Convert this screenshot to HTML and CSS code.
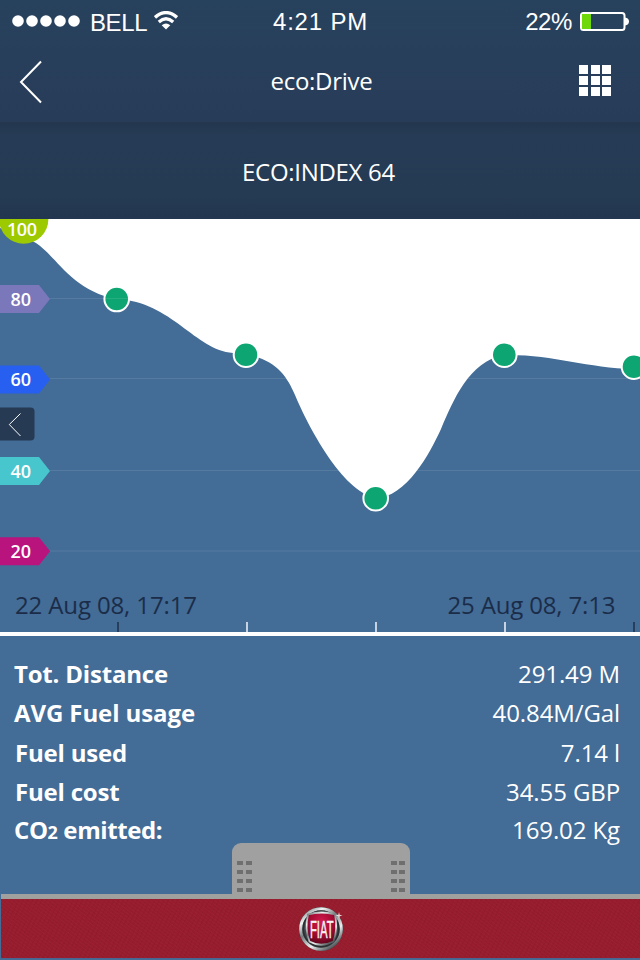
FILE: index.html
```html
<!DOCTYPE html>
<html lang="en">
<head>
<meta charset="utf-8">
<title>eco:Drive</title>
<link rel="stylesheet" href="styles.css">
</head>
<body>
<main class="app">
  <header class="top">
    <div class="status">
      <div class="carrier">
        <svg class="signal" width="68" height="12" viewBox="0 0 68 12"><g fill="#fff"><circle cx="6" cy="6" r="5.8"/><circle cx="20" cy="6" r="5.8"/><circle cx="34" cy="6" r="5.8"/><circle cx="48" cy="6" r="5.8"/><circle cx="62" cy="6" r="5.8"/></g></svg>
        <span class="carrier-name">BELL</span>
        <svg class="wifi" width="24" height="19" viewBox="0 0 24 19"><g fill="none" stroke="#fff" stroke-width="3.300"><path d="M1 6.400Q12-3.200 23 6.400"/><path d="M4.800 10.900Q12 4.600 19.200 10.900"/></g><path fill="#fff" d="M7.700 14.300Q12 10.600 16.300 14.300L12 18.600Z"/></svg>
      </div>
      <time class="clock">4:21 PM</time>
      <div class="power">
        <span class="percent">22%</span>
        <svg class="battery" width="49" height="19" viewBox="0 0 49 19"><rect x="1" y="1" width="43.500" height="17" rx="2.500" fill="none" stroke="#fff" stroke-width="2"/><path d="M45 5.500Q49 6 49 9.500T45 13.500Z" fill="#fff"/><rect x="2" y="2" width="9" height="15" fill="#6fd80a"/></svg>
      </div>
    </div>
    <nav class="nav">
      <svg class="back" width="24" height="44" viewBox="0 0 24 44"><path d="M22 1.500L2 22L22 42.500" fill="none" stroke="#fff" stroke-width="2"/></svg>
      <h1 class="title">eco:Drive</h1>
      <div class="menu"><i></i><i></i><i></i><i></i><i></i><i></i><i></i><i></i><i></i></div>
    </nav>
  </header>
  <section class="index"><h2 class="index-title">ECO:INDEX 64</h2></section>
  <section class="chart">
    <svg class="plot" width="640" height="413" viewBox="0 219 640 413">
      <rect y="219" width="640" height="413" fill="#fff"/>
      <path fill="#436c96" d="M0 228Q20 234 36 243C58 258 72 291 117 299C172 302 195 350 233 353C272 355 286 373 295 395C308 426 342 491 375.500 498C406 498 430 453 441 429C453 401 469 361 504 355C552 354 586 368 634 369H640V632H0Z"/>
      <g fill="#0da571" stroke="#fff" stroke-width="2"><circle cx="116.700" cy="299" r="12.300"/><circle cx="246" cy="354.700" r="12.300"/><circle cx="375.700" cy="498.200" r="12.300"/><circle cx="504.300" cy="354.700" r="12.300"/><circle cx="634" cy="366.700" r="12.300"/></g>
      <g stroke="#fff" stroke-opacity=".1"><path d="M50 298.500H640M50 378.500H640M50 470.500H640M50 551H640"/></g>
      <circle cx="23.700" cy="219" r="24.700" fill="#9cc900"/>
      <path d="M0 285H39L50 299L39 313H0Z" fill="#7a77ba"/>
      <path d="M0 365.500H39L50 379.500L39 393.500H0Z" fill="#275ff0"/>
      <path d="M0 457H39L50 471L39 485H0Z" fill="#48c6ce"/>
      <path d="M0 537.300H39L50 551.300L39 565.300H0Z" fill="#b9137e"/>
      <g class="scale"><text x="22" y="236.300" textLength="30">100</text><text x="20.800" y="305.500">80</text><text x="20.800" y="386">60</text><text x="20.800" y="477.500">40</text><text x="20.800" y="557.800">20</text></g>
      <path d="M0 407.500H30.500Q34.500 407.500 34.500 411.500V436.500Q34.500 440.500 30.500 440.500H0Z" fill="#263a53"/>
      <path d="M20.500 413.500L9.300 424.500L20.500 436" fill="none" stroke="#fff"/>
      <g stroke-width="1.600"><path d="M118 622V632M634 622V632" stroke="#22334e"/><path d="M247 622V632M376 622V632M505 622V632" stroke="#e8edf3"/></g>
      <g class="dates"><text x="15" y="613.500" textLength="182">22 Aug 08, 17:17</text><text x="447.500" y="613.500" textLength="168">25 Aug 08, 7:13</text></g>
    </svg>
  </section>
  <dl class="stats">
    <div class="row"><dt>Tot. Distance</dt><dd>291.49 M</dd></div>
    <div class="row avg"><dt>AVG Fuel usage</dt><dd>40.84M/Gal</dd></div>
    <div class="row fuel"><dt>Fuel used</dt><dd>7.14 l</dd></div>
    <div class="row fuel"><dt>Fuel cost</dt><dd>34.55 GBP</dd></div>
    <div class="row co2"><dt>CO<small>2</small> emitted:</dt><dd>169.02 Kg</dd></div>
  </dl>
  <div class="dock">
    <div class="grip"><i></i><i></i><i></i><i></i><i></i><i></i><i></i><i></i></div>
    <div class="grip"><i></i><i></i><i></i><i></i><i></i><i></i><i></i><i></i></div>
  </div>
  <footer class="brand">
    <svg class="logo" width="46" height="46" viewBox="0 0 46 46">
      <defs>
        <linearGradient id="chrome" x1="0" y1="0" x2=".7" y2="1"><stop offset="0" stop-color="#555b60"/><stop offset=".25" stop-color="#f1f3f3"/><stop offset=".48" stop-color="#777d80"/><stop offset=".75" stop-color="#eceeee"/><stop offset="1" stop-color="#555b5e"/></linearGradient>
        <radialGradient id="ruby" cx=".5" cy=".3" r=".75"><stop offset="0" stop-color="#d31b50"/><stop offset=".55" stop-color="#a10b31"/><stop offset="1" stop-color="#51051a"/></radialGradient>
      </defs>
      <circle cx="23" cy="23" r="22" fill="#41464a"/>
      <circle cx="23" cy="23" r="20.300" fill="none" stroke="url(#chrome)" stroke-width="3"/>
      <circle cx="23" cy="23" r="17.800" fill="none" stroke="#292e31" stroke-width="1.500"/>
      <path d="M10 8.500Q23 4.500 37 8.500Q40 23 35.500 35.500Q23 42 11.500 35.500Q6.500 23 10 8.500Z" fill="url(#ruby)" stroke="url(#chrome)" stroke-width="1.800"/>
      <g class="logo-text"><text x="12" y="31.700" textLength="23.500" lengthAdjust="spacingAndGlyphs">FIAT</text></g>
      <path d="M41 6L41.700 8.700L44.500 9.500L41.700 10.300L41 13L40.300 10.300L37.500 9.500L40.300 8.700Z" fill="#fff" fill-opacity=".8"/>
    </svg>
  </footer>
</main>
</body>
</html>
```

FILE: styles.css
```css
* { box-sizing: border-box; margin: 0; padding: 0; }
body { width: 640px; height: 960px; overflow: hidden; background: #436c96; color: #fff; font-family: "Open Sans", sans-serif; font-size: 24px; }
svg { display: block; }
.app { display: flex; flex-direction: column; width: 640px; height: 960px; }
.top { height: 122px; background: linear-gradient(#27425d, #283f5b 45%, #273c58); }
.status { display: grid; grid-template-columns: 1fr auto 1fr; align-items: center; height: 42px; padding: 2px 11px 0 12px; font-family: "Liberation Sans", sans-serif; }
.carrier { display: flex; align-items: center; }
.carrier-name { margin: 2px 7px 0 10px; font-size: 24px; letter-spacing: -0.4px; }
.wifi { margin-top: -3px; }
.signal { margin-top: -3px; }
.clock { letter-spacing: 0.8px; }
.power { display: flex; align-items: center; justify-content: flex-end; gap: 8px; }
.percent { letter-spacing: -0.4px; }
.battery { margin-top: -2px; }
.nav { display: grid; grid-template-columns: 1fr auto 1fr; align-items: center; height: 80px; padding: 0 29px 0 19px; }
.title { font-size: 24px; font-weight: 400; line-height: 33px; letter-spacing: -0.3px; margin: -3px 0 0 13px; }
.menu { display: grid; grid-template-columns: repeat(3, 8.700px); grid-auto-rows: 8.500px; gap: 2.400px 2.800px; justify-self: end; margin-top: -3px; }
.menu i { background: #fff; }
.index { display: flex; align-items: center; justify-content: center; height: 97px; padding: 1px 3px 0 0; background: linear-gradient(#23364e, #263b55 14%, #253a53 75%, #23364f); }
.index-title { font-size: 24px; font-weight: 400; line-height: 33px; letter-spacing: -0.3px; }
.chart { height: 417px; border-bottom: 4px solid #fff; }
.scale { fill: #fff; font-size: 18px; font-weight: 600; text-anchor: middle; }
.dates { fill: #1b2c49; font-size: 24px; }
.stats { height: 207px; padding: 19px 20px 0 14px; }
.row { display: flex; justify-content: space-between; height: 39.300px; line-height: 38px; }
.avg dt { letter-spacing: -0.1px; }
.fuel { padding-left: 1px; }
dt { font-weight: 700; letter-spacing: -0.200px; }
dt small { font-size: 18px; }
.co2 { margin-top: -1px; }
.co2 dt { letter-spacing: -0.4px; }
dd { letter-spacing: -0.1px; }
.dock { display: flex; justify-content: space-between; align-self: center; width: 178px; height: 51px; margin-right: -2px; padding: 18px 5px 0; background: #a0a0a0; border-radius: 9px 9px 0 0; }
.grip { display: grid; grid-template-columns: 6px 6px; grid-auto-rows: 4px; gap: 5px 2.500px; }
.grip i { background: #6f6f6f; }
.brand { display: flex; justify-content: center; height: 65px; margin-left: 1px; padding-top: 7px; background: repeating-linear-gradient(37deg, #ffffff05 0 1px, #0000 1px 3px), repeating-linear-gradient(118deg, #00000009 0 1px, #0000 1px 4px), #971c2d; border-top: 5px solid #a0a09e; border-bottom: 1px solid #4a6590; }
.logo-text { fill: #f6f3f4; stroke: #f6f3f4; stroke-width: 0.5px; font-family: "Liberation Sans", sans-serif; font-size: 24px; }
```
